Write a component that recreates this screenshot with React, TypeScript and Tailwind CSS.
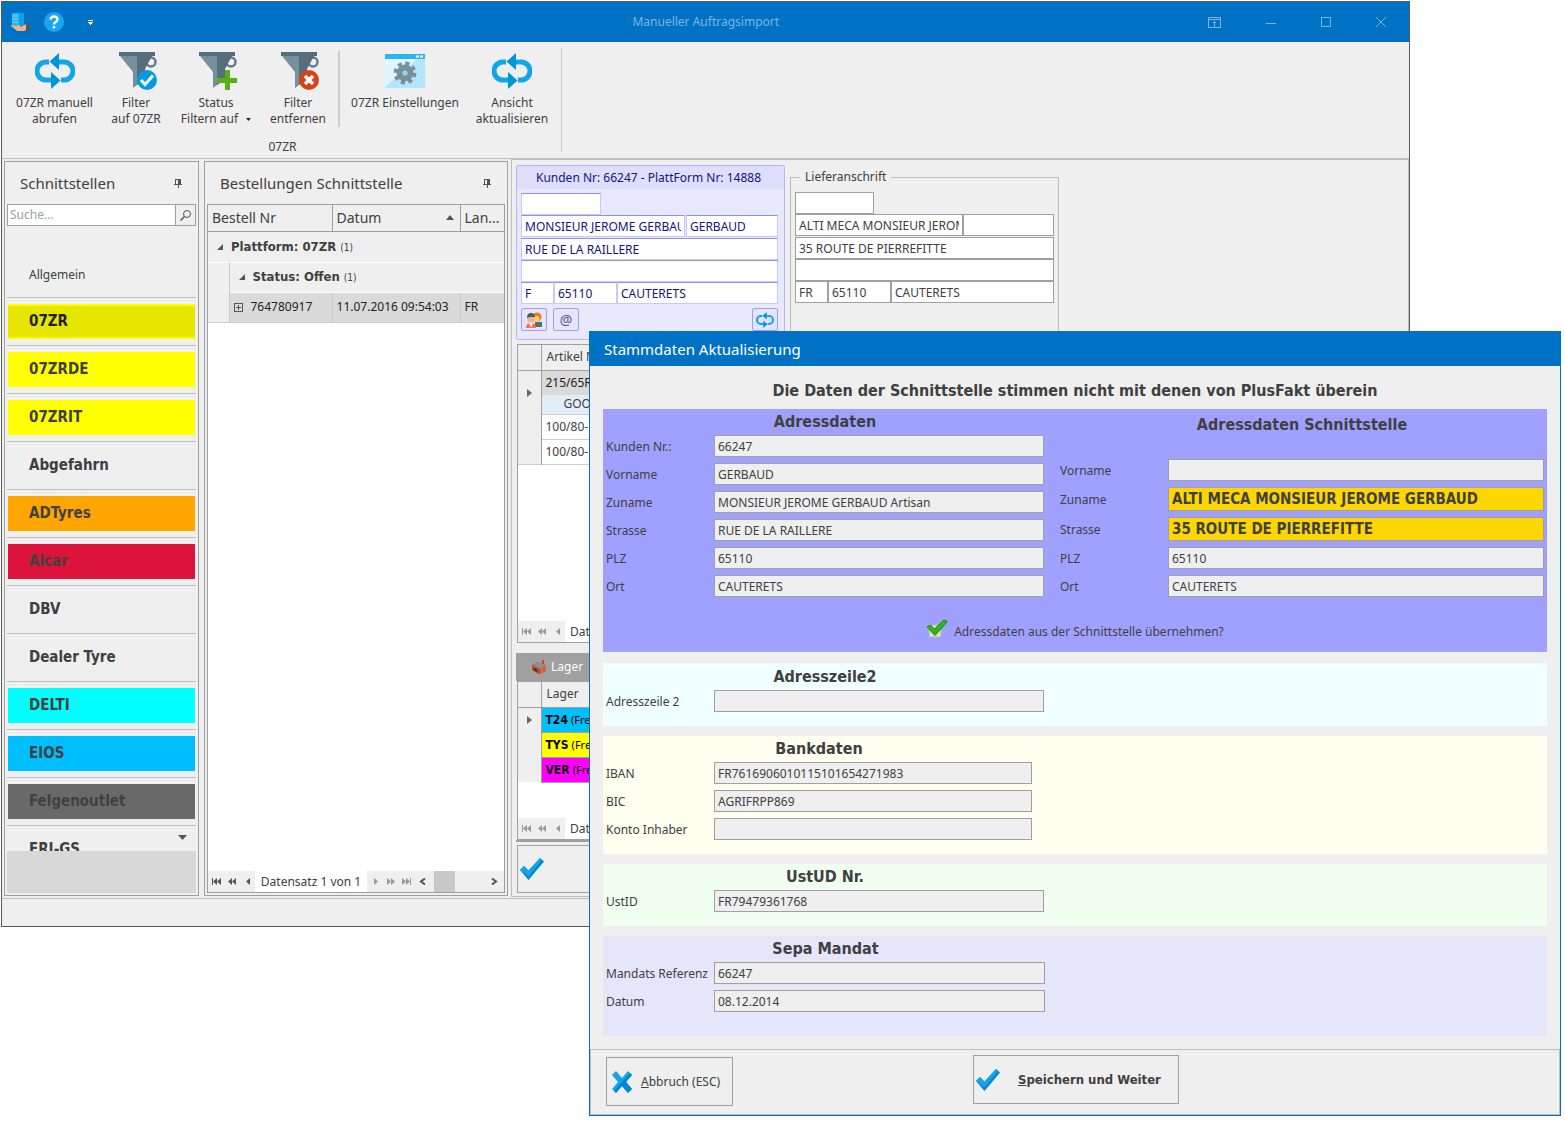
import React from 'react';

interface IconProps {
  className?: string;
}

interface SchnittstelleItem {
  label: string;
  style: string;
}

const schnittstellen: SchnittstelleItem[] = [
  { label: '07ZR', style: 'bg-[#e6e600] border-y-2 border-[#ffff00] text-[#222222]' },
  { label: '07ZRDE', style: 'bg-[#ffff00]' },
  { label: '07ZRIT', style: 'bg-[#ffff00]' },
  { label: 'Abgefahrn', style: '' },
  { label: 'ADTyres', style: 'bg-[#ffa500]' },
  { label: 'Alcar', style: 'bg-[#dc143c]' },
  { label: 'DBV', style: '' },
  { label: 'Dealer Tyre', style: '' },
  { label: 'DELTI', style: 'bg-[#00ffff]' },
  { label: 'EIOS', style: 'bg-[#00bfff]' },
  { label: 'Felgenoutlet', style: 'bg-[#696969]' },
  { label: 'ERI-GS', style: '' },
];

const BOLD = 'font-["DejaVu_Sans_Condensed","DejaVu_Sans",sans-serif] font-bold';

const RefreshIcon = ({ className }: IconProps) => (
  <svg className={className} viewBox="0 0 40 36" fill="none">
    <path d="M14 9H11a9 9 0 0 0 0 18h6" stroke="#12a5e8" strokeWidth="5" />
    <path d="M26 27h3a9 9 0 0 0 0-18h-6" stroke="#12a5e8" strokeWidth="5" />
    <path d="M24 0v17L14.500 8.500z" fill="#0094d8" />
    <path d="M16 19v17l9.500-8.500z" fill="#0094d8" />
  </svg>
);

const Funnel = () => (
  <>
    <circle cx="32" cy="10" r="4.500" fill="none" stroke="#607d8b" strokeWidth="2.500" />
    <path d="M0 0h36v4H0z" fill="#546e7a" />
    <path d="M1 4h17v29l-4 3V20z" fill="#78909c" />
    <path d="M18 4h15L26 17v11l-8 5z" fill="#546e7a" />
  </>
);

const FilterCheckIcon = ({ className }: IconProps) => (
  <svg className={className} viewBox="0 0 38 38">
    <Funnel />
    <circle cx="28" cy="28" r="10" fill="#039be5" />
    <path d="M22 28l4 4.500 8-9" fill="none" stroke="#ffffff" strokeWidth="3" />
  </svg>
);

const FilterPlusIcon = ({ className }: IconProps) => (
  <svg className={className} viewBox="0 0 38 38">
    <Funnel />
    <path d="M26 18h5v8h7v5h-7v7h-5v-7h-8v-5h8z" fill="#56b019" />
  </svg>
);

const FilterRemoveIcon = ({ className }: IconProps) => (
  <svg className={className} viewBox="0 0 38 38">
    <Funnel />
    <circle cx="28" cy="28" r="10" fill="#d84315" />
    <path d="M24 24l8 8M32 24l-8 8" stroke="#ffffff" strokeWidth="3.500" />
  </svg>
);

const SettingsIcon = ({ className }: IconProps) => (
  <svg className={className} viewBox="0 0 40 34">
    <path d="M0 0h40v34H0z" fill="#b3e5fc" />
    <path d="M0 5h32L0 33z" fill="#e1f5fe" />
    <path d="M0 0h40v5H0z" fill="#29b6f6" />
    <path d="M31 1.500h3v2h-3zM35 1.500h3v2h-3z" fill="#ffffff" />
    <circle cx="20" cy="19" r="9.500" fill="none" stroke="#78909c" strokeWidth="4" strokeDasharray="4 3.460" />
    <circle cx="20" cy="19" r="5.500" fill="none" stroke="#78909c" strokeWidth="6" />
    <circle cx="20" cy="19" r="2" fill="#81d4fa" />
  </svg>
);

const CheckMark = ({ className }: IconProps) => (
  <svg className={className} viewBox="0 0 24 22">
    <path d="M0 12l4-4 4.500 4.500L20 0l4 3.500L8.500 22z" fill="#0288d1" />
    <path d="M0 12l4-4 4.500 5L20 0l2 2L8.500 18.500z" fill="#12a5e8" />
  </svg>
);

const CrossMark = ({ className }: IconProps) => (
  <svg className={className} viewBox="0 0 20 22">
    <path d="M4 0l6 7 6-7 4 4-6 7 6 7-4 4-6-7-6 7-4-4 6-7-6-7z" fill="#12a5e8" />
    <path d="M20 4l-6 7 6 7-4 4-6-7-6 7-2-2 16-18z" fill="#0288d1" />
  </svg>
);

const PinIcon = ({ className }: IconProps) => (
  <svg className={className} viewBox="0 0 8 9" fill="#555555" shapeRendering="crispEdges">
    <path d="M1 0h6v5h1v1H5v3H4V6H0V5h1zM2 1v4h2V1z" fillRule="evenodd" />
  </svg>
);

const LogoIcon = ({ className }: IconProps) => (
  <svg className={className} viewBox="0 0 20 20">
    <path d="M2 1h8v13H2z" fill="#29b6f6" />
    <path d="M9 1h5v13H9z" fill="#0aa0ea" />
    <path d="M2 4h6M2 7h6M2 10h6" stroke="#81d4fa" strokeWidth="1" />
    <path d="M0 13l6 1 3-1q2 0 1 2l3-1 3-2h2v5l-4 2H7z" fill="#f5b183" />
    <path d="M16 11h4v8h-4z" fill="#455a64" />
  </svg>
);

const HelpIcon = ({ className }: IconProps) => (
  <svg className={className} viewBox="0 0 20 20">
    <circle cx="10" cy="10" r="10" fill="#1aa7ee" />
    <path d="M6.500 7.500Q7 4.500 10 4.500t3.500 3Q13.500 9 11 10.500q-1 .7-1 2" fill="none" stroke="#ffffff" strokeWidth="2.400" />
    <path d="M8.800 14h2.400v2.400H8.800z" fill="#ffffff" />
  </svg>
);

const PeopleIcon = ({ className }: IconProps) => (
  <svg className={className} viewBox="0 0 16 16">
    <path d="M9 10h7v5H9z" fill="#546e7a" />
    <circle cx="11" cy="5" r="4.500" fill="#f57c00" />
    <circle cx="10.500" cy="7" r="3" fill="#ffcc80" />
    <path d="M0 16q0-5 5-5t5 5z" fill="#ff7043" />
    <path d="M3 11h4l-2 5z" fill="#e1f5fe" />
    <circle cx="5" cy="6.500" r="4" fill="#f5b183" />
    <path d="M1 6q0-5 4-5t4 4H3z" fill="#455a64" />
  </svg>
);

const HouseIcon = ({ className }: IconProps) => (
  <svg className={className} viewBox="0 0 15 14">
    <path d="M0 5l6-3 8 4v5l-7 3-7-4z" fill="#c0442b" />
    <path d="M0 5l6-3 9 3-7 4z" fill="#8d8d8d" />
    <path d="M8 9l6-3v5l-6 3z" fill="#e0603c" />
    <path d="M10 0h2v4h-2z" fill="#d84315" />
    <path d="M2 8l3 1.500V12L2 10.500z" fill="#333333" />
  </svg>
);

const GreenCheck = ({ className }: IconProps) => (
  <svg className={className} viewBox="0 0 22 19">
    <path d="M3 6h12v12H3z" fill="#dcdcdc" stroke="#b4b4b4" />
    <path d="M1 8L4.500 6l4 4L18 1l3.500 1.500L9 16.500z" fill="#2db818" stroke="#158a0b" />
  </svg>
);

interface RibbonButtonProps {
  icon: React.ReactNode;
  lines: string[];
  width: string;
  dropdown?: boolean;
}

const RibbonButton: React.FC<RibbonButtonProps> = ({ icon, lines, width, dropdown }) => (
  <button type="button" className={`${width} flex shrink-0 flex-col items-center leading-4 whitespace-nowrap`}>
    <span className="mb-1 flex h-10 items-center">{icon}</span>
    {lines.map((line, i) => (
      <span key={line} className="flex items-center">
        {line}
        {dropdown && i === lines.length - 1 && (
          <svg className="ml-2 h-[3px] w-[5px]" viewBox="0 0 5 3">
            <path d="M0 0h5L2.500 3z" fill="#222222" />
          </svg>
        )}
      </span>
    ))}
  </button>
);

const PanelTitle = ({ title }: { title: string }) => (
  <div className="flex h-[42px] items-center justify-between pr-[14px] pl-[13px]">
    <h2 className="text-[15px]">{title}</h2>
    <button type="button" aria-label="Fixieren">
      <PinIcon className="h-[9px] w-2" />
    </button>
  </div>
);

const NavArrows = ({ muted }: { muted?: boolean }) => (
  <span className={`flex h-[21px] w-[47px] shrink-0 items-center bg-[#efefef] ${muted ? 'text-[#999999]' : 'text-[#555555]'}`}>
    <svg className="h-[7px] w-[47px]" viewBox="0 0 47 7" fill="currentColor">
      <path d="M4 0h1v7H4zM9 0v7L5 3.500zM13 0v7L9 3.500zM24 0v7l-4-3.500zM28 0v7l-4-3.500zM42 0v7l-4-3.500z" />
    </svg>
  </span>
);

const ForwardArrows = () => (
  <span className="flex h-[21px] w-[46px] shrink-0 items-center bg-[#efefef] text-[#999999]">
    <svg className="h-[7px] w-[46px]" viewBox="0 0 46 7" fill="currentColor">
      <path d="M7 0v7l4-3.500zM20 0v7l4-3.500zM24 0v7l4-3.500zM35 0v7l4-3.500zM39 0v7l4-3.500zM43 0h1v7h-1z" />
    </svg>
  </span>
);

const SchnittstellenPanel = () => (
  <aside className="flex w-[195px] shrink-0 flex-col border border-[#a0a0a0] px-[2px] pb-[2px]">
    <PanelTitle title="Schnittstellen" />
    <div className="flex h-[22px] shrink-0 border border-[#a0a0a0] bg-white">
      <input aria-label="Suche" placeholder="Suche..." className="min-w-0 flex-1 px-[2px] placeholder:text-[#a0a0a0]" />
      <button type="button" aria-label="Suchen" className="flex w-5 items-center justify-center border-l border-[#a0a0a0] bg-[#efefef]">
        <svg className="h-[11px] w-[11px]" viewBox="0 0 11 11" fill="none" stroke="#555555">
          <circle cx="7" cy="4" r="3.500" />
          <path d="M4.500 6.500L.5 10.500" strokeWidth="1.500" />
        </svg>
      </button>
    </div>
    <div className="relative h-[625px] overflow-hidden">
      <button type="button" className="mt-[25px] flex h-[47px] w-full items-center border-b border-[#bdbdbd] pt-px pl-[22px]">
        Allgemein
      </button>
      <ul>
        {schnittstellen.map((item) => (
          <li key={item.label} className="h-12 border-b border-[#bdbdbd] px-px py-[6px]">
            <button
              type="button"
              className={`flex h-[35px] w-full items-center pl-[21px] text-[15px] ${BOLD} ${item.style}`}
            >
              {item.label}
            </button>
          </li>
        ))}
      </ul>
      <svg className="absolute right-[9px] bottom-[11px] h-[5px] w-[9px]" viewBox="0 0 9 5">
        <path d="M0 0h9L4.500 5z" fill="#555555" />
      </svg>
    </div>
    <div className="flex-1 bg-[#d8d8d8]" />
  </aside>
);

const GroupArrow = () => (
  <svg className="h-[6px] w-[6px] shrink-0" viewBox="0 0 6 6">
    <path d="M6 0v6H0z" fill="#555555" />
  </svg>
);

const BestellungenPanel = () => (
  <section className="ml-[5px] flex w-[304px] shrink-0 flex-col border border-[#a0a0a0] px-[2px] pb-[2px]">
    <PanelTitle title="Bestellungen Schnittstelle" />
    <div className="flex flex-1 flex-col border border-[#a0a0a0] bg-white">
      <table className="w-full table-fixed border-collapse">
        <colgroup>
          <col className="w-[21px]" />
          <col className="w-[103px]" />
          <col className="w-[128px]" />
          <col />
        </colgroup>
        <thead>
          <tr className="h-[26px] border-b border-[#a0a0a0] bg-[#efefef] text-left text-[14px] leading-5">
            <th colSpan={2} className="border-r border-[#a0a0a0] pl-1 font-normal">Bestell Nr</th>
            <th className="border-r border-[#a0a0a0] px-1 font-normal">
              <span className="flex items-center justify-between pr-[2px]">
                Datum
                <svg className="h-[5px] w-2" viewBox="0 0 8 5">
                  <path d="M0 5h8L4 0z" fill="#555555" />
                </svg>
              </span>
            </th>
            <th className="pl-1 font-normal">Lan...</th>
          </tr>
        </thead>
        <tbody>
          <tr className="h-[31px] border-b border-white bg-[#efefef]">
            <td colSpan={4} className={`pl-[9px] text-[13px] ${BOLD}`}>
              <span className="flex items-center gap-2">
                <GroupArrow />
                <span>Plattform: 07ZR <span className="text-[10px] font-normal">(1)</span></span>
              </span>
            </td>
          </tr>
          <tr className="h-[30px] bg-[#efefef]">
            <td rowSpan={2} className="border-r border-b border-[#cccccc]" />
            <td colSpan={3} className={`border-b border-white pl-[9px] text-[13px] ${BOLD}`}>
              <span className="flex items-center gap-2">
                <GroupArrow />
                <span>Status: Offen <span className="text-[10px] font-normal">(1)</span></span>
              </span>
            </td>
          </tr>
          <tr className="h-[30px] bg-[#dadada] whitespace-nowrap text-[#222222]">
            <td className="border-r border-b border-[#cccccc] pl-1">
              <span className="flex items-center gap-2">
                <svg className="h-[9px] w-[9px]" viewBox="0 0 9 9" fill="none" stroke="#555555" shapeRendering="crispEdges">
                  <path d="M.5.500h8v8h-8zM2 4.500h5M4.500 2v5" />
                </svg>
                764780917
              </span>
            </td>
            <td className="border-r border-b border-[#cccccc] pl-1">11.07.2016 09:54:03</td>
            <td className="border-b border-[#cccccc] pl-1">FR</td>
          </tr>
        </tbody>
      </table>
      <div className="mt-auto flex h-[21px] items-center whitespace-nowrap">
        <NavArrows />
        <span className="flex-1 text-center">Datensatz 1 von 1</span>
        <ForwardArrows />
        <span className="flex h-[21px] w-[91px] shrink-0 items-center justify-between bg-[#efefef] pr-[6px] pl-[6px]">
          <svg className="h-[7px] w-[7px]" viewBox="0 0 7 7" fill="none" stroke="#555555" strokeWidth="2">
            <path d="M6 .5L2 3.500l4 3" />
          </svg>
          <span className="mr-7 h-[21px] w-[21px] bg-[#c8c8c8]" />
          <svg className="h-[7px] w-[7px]" viewBox="0 0 7 7" fill="none" stroke="#555555" strokeWidth="2">
            <path d="M1 .5l4 3-4 3" />
          </svg>
        </span>
      </div>
    </div>
  </section>
);

interface AddressFieldProps {
  label: string;
  value?: string;
  width: string;
}

const CustomerField: React.FC<AddressFieldProps> = ({ label, value = '', width }) => (
  <input
    aria-label={label}
    defaultValue={value}
    className={`${width} h-[22px] min-w-0 border border-[#c8c8ff] border-t-[#9090ee] bg-white px-[3px] text-[#15157a]`}
  />
);

const DeliveryField: React.FC<AddressFieldProps> = ({ label, value = '', width }) => (
  <input
    aria-label={label}
    defaultValue={value}
    className={`${width} h-[22px] min-w-0 border border-[#a0a0a0] bg-white px-[3px]`}
  />
);

const SMALL_BUTTON = 'flex h-[23px] w-[26px] items-center justify-center rounded-xs border border-[#a0a0f0] bg-[#e4e4ff]';

const CustomerCard = () => (
  <section className="w-[269px] shrink-0 rounded-xs border border-[#b4b4ff] bg-[#e8e8ff] px-1 text-[#15157a]">
    <h3 className="-mx-1 mb-1 flex h-[23px] items-center justify-center bg-[#dedeff] pr-4 pl-3 whitespace-nowrap">
      Kunden Nr: 66247 - PlattForm Nr: 14888
    </h3>
    <div className="pr-[2px]">
      <div className="flex h-[22px]">
        <CustomerField label="Anrede" width="w-20" />
      </div>
      <div className="flex gap-px">
        <CustomerField label="Zuname" value="MONSIEUR JEROME GERBAUD" width="w-[164px]" />
        <CustomerField label="Vorname" value="GERBAUD" width="flex-1" />
      </div>
      <div className="mt-px flex">
        <CustomerField label="Strasse" value="RUE DE LA RAILLERE" width="flex-1" />
      </div>
      <div className="flex">
        <CustomerField label="Adresszeile 2" width="flex-1" />
      </div>
      <div className="flex">
        <CustomerField label="Land" value="F" width="w-[33px]" />
        <CustomerField label="PLZ" value="65110" width="w-[63px]" />
        <CustomerField label="Ort" value="CAUTERETS" width="flex-1" />
      </div>
      <div className="mt-1 mb-2 flex gap-[6px]">
        <button type="button" aria-label="Kontakte" className={SMALL_BUTTON}>
          <PeopleIcon className="h-4 w-4" />
        </button>
        <button type="button" aria-label="E-Mail" className={`${SMALL_BUTTON} text-[14px] leading-4 text-[#5a5a8c]`}>
          @
        </button>
        <button type="button" aria-label="Aktualisieren" className={`${SMALL_BUTTON} ml-auto`}>
          <RefreshIcon className="h-4 w-[18px]" />
        </button>
      </div>
    </div>
  </section>
);

const DeliveryCard = () => (
  <fieldset className="h-[166px] w-[269px] min-w-0 border border-[#bdbdbd] px-1 pt-[7px]">
    <legend className="ml-[5px] px-[5px] leading-4">Lieferanschrift</legend>
    <div className="flex">
      <DeliveryField label="Anrede Lieferung" width="w-[79px]" />
    </div>
    <div className="flex">
      <DeliveryField label="Name Lieferung" value="ALTI MECA MONSIEUR JEROME GERBAUD" width="w-[168px]" />
      <DeliveryField label="Vorname Lieferung" width="flex-1" />
    </div>
    <div className="mt-px flex">
      <DeliveryField label="Strasse Lieferung" value="35 ROUTE DE PIERREFITTE" width="flex-1" />
    </div>
    <div className="flex">
      <DeliveryField label="Adresszeile 2 Lieferung" width="flex-1" />
    </div>
    <div className="flex">
      <DeliveryField label="Land Lieferung" value="FR" width="w-[33px]" />
      <DeliveryField label="PLZ Lieferung" value="65110" width="w-[63px]" />
      <DeliveryField label="Ort Lieferung" value="CAUTERETS" width="flex-1" />
    </div>
  </fieldset>
);

const RowMarker = () => (
  <svg className="mx-auto h-2 w-[5px]" viewBox="0 0 5 8">
    <path d="M0 0v8l5-4z" fill="#666666" />
  </svg>
);

const TableNavigator = () => (
  <div className="mt-auto flex h-[21px] items-center">
    <NavArrows muted />
    <span className="pl-[5px]">Datensatz 1 von 3</span>
  </div>
);

const ArticleTable = () => (
  <div className="mt-1 ml-px flex h-[299px] flex-col border border-[#a0a0a0] bg-white">
    <table className="w-full table-fixed border-collapse text-left">
      <colgroup>
        <col className="w-[23px]" />
        <col />
      </colgroup>
      <thead>
        <tr className="h-[25px] border-b border-[#a0a0a0] bg-[#efefef]">
          <th className="border-r border-[#a0a0a0]" />
          <th className="pl-[5px] font-normal">Artikel Nr</th>
        </tr>
      </thead>
      <tbody>
        <tr className="h-[25px]">
          <td rowSpan={4} className="border-r border-[#a0a0a0] bg-[#efefef] pt-[18px] align-top"><RowMarker /></td>
          <td className="bg-[#dadada] pl-1 text-[#222222]">215/65R16</td>
        </tr>
        <tr className="h-[19px] border-b border-[#cccccc]">
          <td className="bg-[#e1eef7] pl-[22px] leading-4">GOODYEAR</td>
        </tr>
        <tr className="h-[25px] border-b border-[#cccccc]">
          <td className="pl-1">100/80-17</td>
        </tr>
        <tr className="h-[25px] border-b border-[#cccccc]">
          <td className="pl-1">100/80-18</td>
        </tr>
      </tbody>
    </table>
    <TableNavigator />
  </div>
);

const lager = [
  { code: 'T24', color: 'bg-[#00bfff]' },
  { code: 'TYS', color: 'bg-[#ffff00]' },
  { code: 'VER', color: 'bg-[#ff00ff]' },
];

const LagerTable = () => (
  <div className="mt-[10px] border-b-2 border-[#a0a0a0]">
    <h3 className="flex h-7 items-center gap-1 bg-[#a0a0a0] pl-4 text-white">
      <HouseIcon className="h-[14px] w-[15px]" />
      Lager
    </h3>
    <div className="ml-px flex h-[159px] flex-col border border-[#a0a0a0] bg-white">
      <table className="w-full table-fixed border-collapse text-left">
        <colgroup>
          <col className="w-[23px]" />
          <col />
        </colgroup>
        <thead>
          <tr className="h-[25px] border-b border-[#a0a0a0] bg-[#efefef]">
            <th className="border-r border-[#a0a0a0]" />
            <th className="pl-[5px] font-normal">Lager</th>
          </tr>
        </thead>
        <tbody>
          {lager.map((row, i) => (
            <tr key={row.code} className="h-[25px]">
              <td className="border-r border-[#a0a0a0] bg-[#efefef]">{i === 0 && <RowMarker />}</td>
              <td className={`border-b border-[#a0a0a0] pl-1 text-black ${row.color}`}>
                <span className={BOLD}>{row.code}</span> <span className="text-[11px]">(Frei)</span>
              </td>
            </tr>
          ))}
        </tbody>
      </table>
      <TableNavigator />
    </div>
  </div>
);

const TitleBar = () => (
  <header className="flex h-10 items-center bg-[#0072c6] pl-2 text-[#7fb5e0]">
    <div className="flex w-[194px] items-center">
      <LogoIcon className="h-5 w-5" />
      <button type="button" aria-label="Hilfe" className="ml-[14px]">
        <HelpIcon className="h-5 w-5" />
      </button>
      <button type="button" aria-label="Schnellzugriff anpassen" className="ml-6">
        <svg className="h-[5px] w-[5px]" viewBox="0 0 5 5" fill="#ffffff" shapeRendering="crispEdges">
          <path d="M0 0h5v1H0zM0 2h5v1H4v1H3v1H2V4H1V3H0z" />
        </svg>
      </button>
    </div>
    <h1 className="flex-1 text-center">Manueller Auftragsimport</h1>
    <div className="flex items-center gap-[45px] pr-[23px]">
      <button type="button" aria-label="Menüband ausblenden">
        <svg className="h-[11px] w-[13px]" viewBox="0 0 13 11" fill="none" stroke="currentColor" shapeRendering="crispEdges">
          <path d="M.5.500h12v10H.500zM.5 2.500h12M6.500 4v6M4.500 6.500l2-2 2 2" />
        </svg>
      </button>
      <button type="button" aria-label="Minimieren">
        <svg className="h-[11px] w-[10px]" viewBox="0 0 10 11" fill="none" stroke="currentColor">
          <path d="M0 6.500h10" />
        </svg>
      </button>
      <button type="button" aria-label="Maximieren">
        <svg className="h-[10px] w-[10px]" viewBox="0 0 10 10" fill="none" stroke="currentColor">
          <path d="M.5.500h9v9h-9z" />
        </svg>
      </button>
      <button type="button" aria-label="Schließen">
        <svg className="h-[10px] w-[10px]" viewBox="0 0 10 10" fill="none" stroke="currentColor">
          <path d="M0 0l10 10M10 0L0 10" />
        </svg>
      </button>
    </div>
  </header>
);

const Ribbon = () => (
  <div className="flex h-[117px] border-b border-[#bdbdbd] pt-[6px]">
    <div className="flex h-[104px] flex-col border-r border-[#cccccc] pr-[7px] pl-[9px]">
      <div className="flex pt-[3px]">
        <RibbonButton width="w-[87px]" icon={<RefreshIcon className="h-9 w-10" />} lines={['07ZR manuell', 'abrufen']} />
        <RibbonButton width="w-[76px]" icon={<FilterCheckIcon className="ml-1 h-[38px] w-[38px]" />} lines={['Filter', 'auf 07ZR']} />
        <RibbonButton width="w-[84px]" dropdown icon={<FilterPlusIcon className="ml-1 h-[38px] w-[38px]" />} lines={['Status', 'Filtern auf']} />
        <RibbonButton width="w-20" icon={<FilterRemoveIcon className="ml-1 h-[38px] w-[38px]" />} lines={['Filter', 'entfernen']} />
        <div className="h-[76px] w-[2px] bg-[#cccccc]" />
        <RibbonButton width="w-[130px]" icon={<SettingsIcon className="h-[34px] w-10" />} lines={['07ZR Einstellungen']} />
        <RibbonButton width="w-[84px]" icon={<RefreshIcon className="h-9 w-10" />} lines={['Ansicht', 'aktualisieren']} />
      </div>
      <div className="mt-3 text-center leading-4">07ZR</div>
    </div>
  </div>
);

const MainWindow = () => (
  <div className="mt-px ml-px flex w-[90%] min-w-[1100px] flex-col overflow-hidden border border-[#5a5a5a] bg-[#efefef]">
    <TitleBar />
    <Ribbon />
    <main className="flex border-b border-[#bdbdbd] pl-[2px]">
      <div className="my-[2px] flex">
        <SchnittstellenPanel />
        <BestellungenPanel />
      </div>
      <section className="mb-px ml-[3px] min-w-0 flex-1 border border-[#bdbdbd] pt-[5px] pl-1">
        <div className="flex gap-[5px]">
          <CustomerCard />
          <div className="pt-1">
            <DeliveryCard />
          </div>
        </div>
        <ArticleTable />
        <LagerTable />
        <button type="button" aria-label="Übernehmen" className="my-[3px] ml-px flex h-12 w-1/2 items-center border border-[#a0a0a0] pl-[2px]">
          <CheckMark className="h-[22px] w-6" />
        </button>
      </section>
    </main>
    <footer className="h-[27px]" />
  </div>
);

interface FormFieldProps {
  id: string;
  label: string;
  value?: string;
  changed?: boolean;
}

const FormField: React.FC<FormFieldProps> = ({ id, label, value = '', changed }) => (
  <div className="flex items-center">
    <label htmlFor={id} className="w-[108px] shrink-0 pt-[2px] whitespace-nowrap">{label}</label>
    <input
      id={id}
      readOnly
      defaultValue={value}
      className={`min-w-0 flex-1 border border-[#a0a0a0] px-[3px] ${
        changed ? `h-6 bg-[#ffd700] text-[15px] ${BOLD}` : 'h-[22px] bg-[#efefef]'
      }`}
    />
  </div>
);

const SectionHeading = ({ text }: { text: string }) => (
  <h3 className={`h-[26px] text-center text-[16px] leading-[26px] ${BOLD}`}>{text}</h3>
);

const Dialog = () => (
  <div
    role="dialog"
    aria-labelledby="dialog-title"
    className="absolute top-[331px] right-1 left-[589px] border border-[#0072c6] bg-[#efefef]"
  >
    <h2 id="dialog-title" className="flex h-[34px] items-center bg-[#0072c6] pl-[14px] text-[15px] text-white">
      Stammdaten Aktualisierung
    </h2>
    <div className="px-[13px] pb-[13px]">
      <p className={`flex h-[43px] items-center justify-center pt-[7px] text-[16px] ${BOLD}`}>
        Die Daten der Schnittstelle stimmen nicht mit denen von PlusFakt überein
      </p>
      <section className="bg-[#a0a0ff] pr-[3px] pb-[11px] pl-[3px]">
        <div className="flex gap-4">
          <div className="flex w-[438px] shrink-0 flex-col gap-[6px]">
            <div className="-mb-[6px]">
              <SectionHeading text="Adressdaten" />
            </div>
            <FormField id="kunden-nr" label="Kunden Nr.:" value="66247" />
            <FormField id="vorname" label="Vorname" value="GERBAUD" />
            <FormField id="zuname" label="Zuname" value="MONSIEUR JEROME GERBAUD Artisan" />
            <FormField id="strasse" label="Strasse" value="RUE DE LA RAILLERE" />
            <FormField id="plz" label="PLZ" value="65110" />
            <FormField id="ort" label="Ort" value="CAUTERETS" />
          </div>
          <div className="min-w-0 flex-1 pt-[3px]">
            <SectionHeading text="Adressdaten Schnittstelle" />
            <div className="mt-[21px] flex flex-col gap-[6px]">
              <FormField id="s-vorname" label="Vorname" />
              <FormField id="s-zuname" label="Zuname" value="ALTI MECA MONSIEUR JEROME GERBAUD" changed />
              <FormField id="s-strasse" label="Strasse" value="35 ROUTE DE PIERREFITTE" changed />
              <FormField id="s-plz" label="PLZ" value="65110" />
              <FormField id="s-ort" label="Ort" value="CAUTERETS" />
            </div>
          </div>
        </div>
        <label className="mt-[22px] flex h-[22px] items-center justify-center gap-[6px]">
          <input type="checkbox" defaultChecked className="peer sr-only" />
          <GreenCheck className="mb-1 h-[19px] w-[22px]" />
          <span className="pt-1">Adressdaten aus der Schnittstelle übernehmen?</span>
        </label>
      </section>

      <section className="mt-[11px] bg-[#f0ffff] pt-px pb-[14px] pl-[3px]">
        <div className="w-[438px]">
          <SectionHeading text="Adresszeile2" />
          <FormField id="adresszeile2" label="Adresszeile 2" />
        </div>
      </section>

      <section className="mt-[10px] bg-[#fffff0] pb-[14px] pl-[3px]">
        <div className="flex w-[426px] flex-col gap-[6px]">
          <div className="-mb-[6px]">
            <SectionHeading text="Bankdaten" />
          </div>
          <FormField id="iban" label="IBAN" value="FR7616906010115101654271983" />
          <FormField id="bic" label="BIC" value="AGRIFRPP869" />
          <FormField id="inhaber" label="Konto Inhaber" />
        </div>
      </section>

      <section className="mt-[10px] bg-[#f0fff0] pb-[14px] pl-[3px]">
        <div className="w-[438px]">
          <SectionHeading text="UstUD Nr." />
          <FormField id="ustid" label="UstID" value="FR79479361768" />
        </div>
      </section>

      <section className="mt-[10px] bg-[#e6e6fa] pb-6 pl-[3px]">
        <div className="flex w-[439px] flex-col gap-[6px]">
          <div className="-mb-[6px]">
            <SectionHeading text="Sepa Mandat" />
          </div>
          <FormField id="mandat" label="Mandats Referenz" value="66247" />
          <FormField id="datum" label="Datum" value="08.12.2014" />
        </div>
      </section>
    </div>

    <footer className="flex h-[66px] border border-[#bdbdbd] pl-[15px]">
      <button type="button" className="mt-[7px] flex h-[49px] w-[127px] items-center gap-2 border border-[#a0a0a0] pl-1 whitespace-nowrap">
        <CrossMark className="h-[22px] w-[22px]" />
        <span><u>A</u>bbruch (ESC)</span>
      </button>
      <button type="button" className="mt-[5px] ml-60 flex h-[49px] w-[206px] items-center gap-[18px] border border-[#a0a0a0] pl-[2px] whitespace-nowrap">
        <CheckMark className="h-[22px] w-6" />
        <span className={`text-[13px] ${BOLD}`}><u>S</u>peichern und Weiter</span>
      </button>
    </footer>
  </div>
);

const App: React.FC = () => {
  return (
    <div className='relative min-h-screen overflow-hidden bg-white font-["Noto_Sans",sans-serif] text-[12px] text-[#404040]'>
      <MainWindow />
      <Dialog />
    </div>
  );
};

export default App;
